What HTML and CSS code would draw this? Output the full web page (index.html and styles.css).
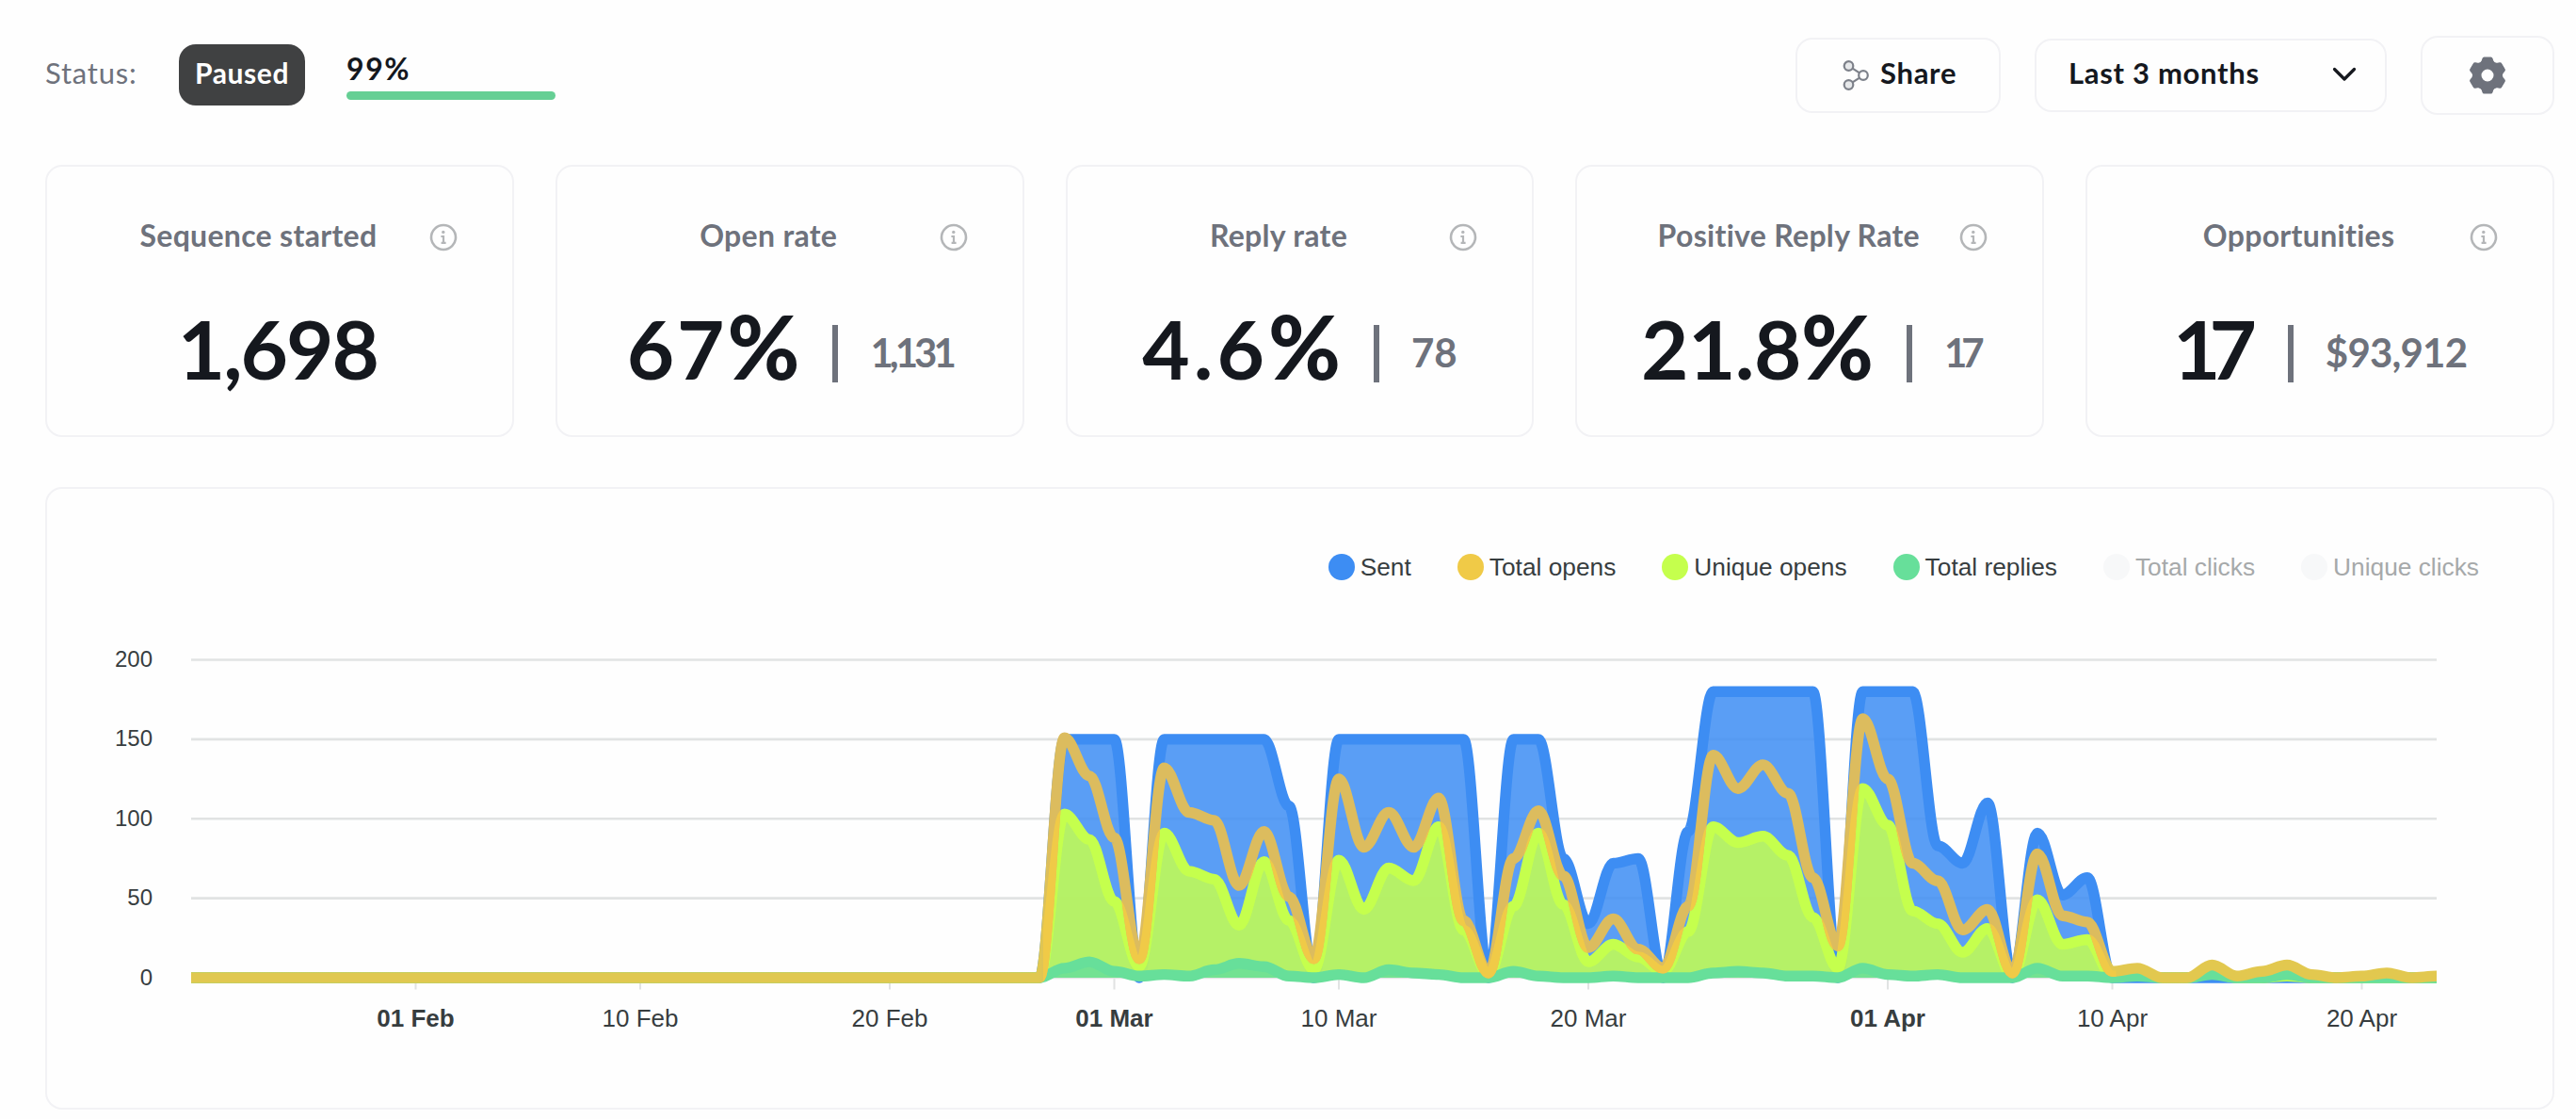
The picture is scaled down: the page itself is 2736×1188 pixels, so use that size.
FILE: index.html
```html
<!DOCTYPE html>
<html lang="en">
<head>
    <meta charset="UTF-8">
    <meta name="viewport" content="width=device-width, initial-scale=1.0">
    <title>Campaign Analytics</title>
    <link rel="stylesheet" href="styles.css">
</head>
<body>
    <svg class="sprite">
        <symbol id="icon-info" viewBox="0 0 30 30">
            <circle cx="15" cy="15" r="13" fill="none" stroke="currentColor" stroke-width="2.6"/>
            <circle cx="14.8" cy="9.4" r="1.7" fill="currentColor"/>
            <path d="M12.4 14h2.6v6.6M12.6 20.8h5" fill="none" stroke="currentColor" stroke-width="2.2"/>
        </symbol>
        <symbol id="gear-tooth" viewBox="-20 -20 40 40">
            <path d="M-3.6 -19.5H3.6Q5 -19.5 5.5 -18L6.3 -15.6Q7.2 -13.6 10 -12.4L6 -9H-6L-10 -12.4Q-7.2 -13.6 -6.3 -15.6L-5.5 -18Q-5 -19.5 -3.6 -19.5Z"/>
        </symbol>
    </svg>

    <div class="container">
        <div class="topbar">
            <span class="status-label">Status:</span>
            <span class="badge">Paused</span>
            <div class="progress">
                <span class="progress-value">99%</span>
                <div class="progress-bar"></div>
            </div>

            <div class="actions">
                <button class="btn btn-share">
                    <svg class="icon-share" viewBox="0 0 28 34" fill="#e6e8ea" stroke="currentColor" stroke-width="2.2">
                        <circle cx="6.5" cy="7" r="4.8"/>
                        <circle cx="22" cy="17" r="4.8" fill="none"/>
                        <circle cx="6.5" cy="27" r="4.8"/>
                        <path d="M10.6 9.6l7.4 4.8M10.6 24.4l7.4-4.8"/>
                    </svg>
                    <span>Share</span>
                </button>
                <button class="btn btn-range">
                    <span>Last 3 months</span>
                    <svg class="icon-chevron" viewBox="0 0 26 16" fill="none" stroke="currentColor" stroke-width="3.2" stroke-linecap="round" stroke-linejoin="round">
                        <path d="M2.5 2.5L13 13L23.5 2.5"/>
                    </svg>
                </button>
                <button class="btn btn-settings">
                    <svg class="icon-gear" viewBox="-20 -20 40 40" fill="currentColor">
                        <circle r="10.8" fill="none" stroke="currentColor" stroke-width="8.6"/>
                        <g id="teeth">
                            <use href="#gear-tooth" x="-20" y="-20" width="40" height="40"/>
                            <use href="#gear-tooth" x="-20" y="-20" width="40" height="40" transform="rotate(60)"/>
                            <use href="#gear-tooth" x="-20" y="-20" width="40" height="40" transform="rotate(120)"/>
                        </g>
                        <use href="#teeth" transform="rotate(180)"/>
                    </svg>
                </button>
            </div>
        </div>

        <div class="cards">
            <div class="card">
                <div class="card-header">
                    <h3>Sequence started</h3>
                    <svg class="icon-info"><use href="#icon-info"/></svg>
                </div>
                <div class="card-value sequence"><strong>1,698</strong></div>
            </div>
            <div class="card">
                <div class="card-header">
                    <h3>Open rate</h3>
                    <svg class="icon-info"><use href="#icon-info"/></svg>
                </div>
                <div class="card-value open-rate"><strong>67<b>%</b></strong><i class="divider"></i><span>1,131</span></div>
            </div>
            <div class="card">
                <div class="card-header">
                    <h3>Reply rate</h3>
                    <svg class="icon-info"><use href="#icon-info"/></svg>
                </div>
                <div class="card-value reply-rate"><strong>4.6<b>%</b></strong><i class="divider"></i><span>78</span></div>
            </div>
            <div class="card">
                <div class="card-header">
                    <h3>Positive Reply Rate</h3>
                    <svg class="icon-info"><use href="#icon-info"/></svg>
                </div>
                <div class="card-value positive"><strong>21.8<b>%</b></strong><i class="divider"></i><span>17</span></div>
            </div>
            <div class="card">
                <div class="card-header">
                    <h3>Opportunities</h3>
                    <svg class="icon-info"><use href="#icon-info"/></svg>
                </div>
                <div class="card-value opportunities"><strong>17</strong><i class="divider"></i><span>$93,912</span></div>
            </div>
        </div>

        <div class="chart-card">
            <div class="legend">
                <span class="legend-item"><i class="dot sent"></i>Sent</span>
                <span class="legend-item"><i class="dot opens"></i>Total opens</span>
                <span class="legend-item"><i class="dot unique"></i>Unique opens</span>
                <span class="legend-item"><i class="dot replies"></i>Total replies</span>
                <span class="legend-item off"><i class="dot"></i>Total clicks</span>
                <span class="legend-item off"><i class="dot"></i>Unique clicks</span>
            </div>
            <svg id="chart" class="chart" viewBox="0 0 2661 460"></svg>
        </div>
    </div>

    <script>
        // daily values, 23 Jan - 23 Apr; everything before 27 Feb is zero
        const START = 35;
        const DAYS = 91;
        const series = {
            sent: [150, 150, 150, 0, 150, 150, 150, 150, 150, 108, 0, 150, 150, 150, 150, 150, 150, 0,
                150, 150, 75, 34, 72, 75, 0, 92, 180, 180, 180, 180, 180, 0, 180, 180, 180, 83,
                72, 110, 0, 91, 52, 63],
            opens: [151, 127, 88, 12, 132, 104, 99, 58, 92, 51, 12, 125, 82, 104, 82, 113, 36, 3,
                75, 105, 64, 19, 37, 18, 6, 45, 140, 119, 134, 116, 63, 20, 163, 125, 72, 61,
                30, 43, 3, 78, 39, 35, 4, 6, 0, 0, 8, 1, 4, 8, 2, 0, 1, 3, 0, 1],
            unique: [103, 87, 48, 7, 91, 67, 62, 33, 73, 36, 5, 74, 43, 69, 61, 95, 30, 2,
                45, 91, 46, 10, 21, 13, 4, 29, 95, 85, 89, 77, 38, 6, 119, 96, 42, 34,
                16, 31, 1, 49, 21, 24, 1, 2, 0, 0, 3, 0, 0, 1],
            replies: [6, 10, 4, 1, 2, 1, 5, 9, 7, 1, 0, 2, 0, 5, 3, 2, 0, 0,
                4, 1, 0, 0, 1, 0, 0, 0, 3, 4, 3, 1, 1, 0, 6, 2, 1, 2,
                0, 0, 0, 6, 1, 1, 0, 1, 0, 0, 2, 0, 0, 2]
        };

        const left = 153, step = 26.5, zero = 378, unit = 1.6875;
        const right = left + step * (DAYS - 1);
        const px = i => left + step * i;
        const py = v => zero - v * unit;

        function linePath(values) {
            let d = `M${px(0)} ${py(0)}`;
            let prev = 0;
            for (let i = 1; i < DAYS; i++) {
                const v = values[i - START] || 0;
                const k = step * 0.35;
                d += `C${px(i - 1) + k} ${py(prev)} ${px(i) - k} ${py(v)} ${px(i)} ${py(v)}`;
                prev = v;
            }
            return d;
        }

        let svg = '';
        for (let v = 0; v <= 200; v += 50) {
            svg += `<line class="grid" x1="${left}" x2="${right}" y1="${py(v)}" y2="${py(v)}"/>`;
            svg += `<text class="y-label" x="112" y="${py(v) + 7.5}">${v}</text>`;
        }

        const ticks = [[9, '01 Feb'], [18, '10 Feb'], [28, '20 Feb'], [37, '01 Mar'], [46, '10 Mar'],
            [56, '20 Mar'], [68, '01 Apr'], [77, '10 Apr'], [87, '20 Apr']];
        for (const [i, label] of ticks) {
            svg += `<line class="tick" x1="${px(i)}" x2="${px(i)}" y1="${zero}" y2="${zero + 12.5}"/>`;
            svg += `<text class="x-label${label.startsWith('01') ? ' month' : ''}" x="${px(i)}" y="430">${label}</text>`;
        }

        const close = `L${right} ${zero}L${left} ${zero}Z`;
        const unique = linePath(series.unique);
        const opens = linePath(series.opens);

        svg += `<defs>
            <clipPath id="plot"><rect x="${left}" y="0" width="${right - left}" height="${zero + 6}"/></clipPath>
            <clipPath id="active"><rect x="${px(34) + 4}" y="0" width="${px(77) - px(34)}" height="${zero + 6}"/></clipPath>
            <mask id="overUnique" maskUnits="userSpaceOnUse" x="0" y="0" width="2661" height="460">
                <g clip-path="url(#active)"><path d="${unique + close}" fill="#fff"/>
                <path d="${unique}" fill="none" stroke="#fff" stroke-width="11.4"/></g>
            </mask>
            <linearGradient id="opensLine" gradientUnits="userSpaceOnUse" x1="${px(34)}" x2="${px(77)}" y1="0" y2="0">
                <stop offset="0" stop-color="#e0c850"/><stop offset="0.01" stop-color="#dcbc5e"/>
                <stop offset="0.99" stop-color="#dcbc5e"/><stop offset="1" stop-color="#e2c84f"/>
            </linearGradient>
        </defs><g clip-path="url(#plot)">`;
        for (const name of ['sent', 'unique', 'replies']) {
            const d = linePath(series[name]);
            svg += `<path class="area ${name}" d="${d + close}"/><path class="line ${name}" d="${d}"/>`;
        }
        svg += `<path class="line opens" d="${opens}"/>`;
        svg += `<path class="line opens-bright" d="${opens}" mask="url(#overUnique)"/></g>`;

        document.getElementById('chart').innerHTML = svg;
    </script>
</body>
</html>
```
FILE: styles.css
```css
* {
    box-sizing: border-box;
}

body {
    font-family: Lato, "Liberation Sans", sans-serif;
    margin: 0;
    padding: 0;
    background-color: #fefefe;
    color: #15181e;
}

.sprite {
    display: none;
}

.container {
    padding: 38px 23px 0 48px;
}

.topbar {
    display: flex;
    align-items: center;
    height: 84px;
}

.status-label {
    width: 142px;
    padding-bottom: 6px;
    font-size: 31px;
    letter-spacing: 0.8px;
    color: #6e727c;
}

.badge {
    width: 134px;
    height: 65px;
    line-height: 60px;
    margin-bottom: 2px;
    border-radius: 18px;
    background-color: #404142;
    color: white;
    font-size: 30px;
    font-weight: bold;
    letter-spacing: 0.6px;
    text-align: center;
}

.progress {
    width: 222px;
    margin-left: 44px;
}

.progress-value {
    display: block;
    font-size: 32px;
    font-weight: bold;
    letter-spacing: 1.6px;
    line-height: 38px;
}

.progress-bar {
    height: 9px;
    margin-top: 5px;
    border-radius: 5px;
    background-color: #65cf94;
}

.actions {
    display: flex;
    align-items: center;
    gap: 36px;
    margin-left: auto;
}

.btn {
    display: flex;
    align-items: center;
    border: 2px solid #f2f2f5;
    border-radius: 18px;
    background-color: #fefefe;
    color: #15181e;
    font-family: inherit;
    font-size: 31px;
    font-weight: bold;
    letter-spacing: 0.7px;
    padding: 0;
}

.btn span {
    padding-bottom: 6px;
}

.btn-share {
    width: 218px;
    height: 80px;
    padding-left: 48px;
    gap: 12px;
}

.btn-range {
    width: 374px;
    height: 78px;
    padding: 0 30px 0 34px;
    justify-content: space-between;
}

.btn-settings {
    width: 142px;
    height: 84px;
    justify-content: center;
}

.icon-share {
    width: 28px;
    height: 34px;
    color: #7d818a;
}

.icon-chevron {
    width: 26px;
    height: 16px;
    margin-bottom: 3px;
}

.icon-gear {
    width: 40px;
    height: 40px;
    color: #6e727c;
}

.cards {
    display: grid;
    grid-template-columns: repeat(5, 1fr);
    gap: 44px;
    margin-top: 53px;
}

.card {
    height: 289px;
    border: 2px solid #f2f2f5;
    border-radius: 18px;
    padding-top: 54px;
}

.card-header {
    display: flex;
    align-items: center;
    height: 42px;
    padding: 0 58px 0 43px;
}

.card-header h3 {
    flex: 1;
    margin: 0;
    padding-bottom: 5px;
    font-size: 32px;
    font-weight: bold;
    letter-spacing: 0.3px;
    color: #6e727c;
    text-align: center;
    white-space: nowrap;
}

.icon-info {
    width: 30px;
    height: 30px;
    color: #b4b6b8;
}

.card-value {
    display: flex;
    align-items: center;
    justify-content: center;
    height: 110px;
    margin-top: 47px;
}

.card-value strong {
    padding-bottom: 11px;
    font-size: 87px;
    line-height: 99px;
}

.card-value b {
    font-size: 93px;
    line-height: 0;
    letter-spacing: 0;
}

.card-value span {
    padding-bottom: 2px;
    font-size: 42px;
    font-weight: bold;
    color: #6e727c;
}

.divider {
    width: 6px;
    height: 61px;
    margin: 0 34px 0 35px;
    background-color: #6e727c;
}

.sequence strong { letter-spacing: -2px; margin-right: 4px; }
.open-rate strong { letter-spacing: 3px; }
.open-rate span { letter-spacing: -4px; }
.reply-rate strong { letter-spacing: 4px; }
.positive strong { letter-spacing: -0.5px; }
.positive span { letter-spacing: -6px; }
.opportunities strong { letter-spacing: -12px; margin-right: 10px; }
.opportunities span { letter-spacing: -0.8px; }

.chart-card {
    height: 661px;
    margin-top: 53px;
    border: 2px solid #f2f2f5;
    border-radius: 18px;
}

.legend {
    display: flex;
    justify-content: flex-end;
    gap: 49px;
    height: 28px;
    margin-top: 69px;
    padding-right: 78px;
    font-family: "Liberation Sans", sans-serif;
    font-size: 26.3px;
    line-height: 29px;
    color: #373d3f;
}

.legend-item {
    display: flex;
    align-items: center;
    gap: 6px;
}

.legend-item.off {
    color: #a6a9aa;
}

.dot {
    width: 28px;
    height: 28px;
    border-radius: 50%;
    background-color: #f7f8f9;
}

.dot.sent { background-color: #3d8df3; }
.dot.opens { background-color: #f0ca47; }
.dot.unique { background-color: #c5ff4d; }
.dot.replies { background-color: #67df9a; }

.chart {
    display: block;
    width: 2661px;
    height: 460px;
    margin-top: 44px;
}

.grid {
    stroke: #e1e3e3;
    stroke-width: 2.6;
}

.tick {
    stroke: #e1e3e3;
    stroke-width: 2;
}

.y-label, .x-label {
    font-family: "Liberation Sans", sans-serif;
    font-size: 24px;
    fill: #373d3f;
    text-anchor: end;
}

.x-label {
    font-size: 26px;
    text-anchor: middle;
}

.month {
    font-weight: bold;
}

.area {
    fill-opacity: 0.85;
}

.area.sent { fill: #3d8df3; }
.area.unique { fill: #c5ff4d; }
.area.replies { fill: #67df9a; }

.line {
    fill: none;
    stroke-width: 11.4;
}

.line.sent { stroke: #3d8df3; }
.line.unique { stroke: #c5ff4d; }
.line.replies { stroke: #67df9a; }
.line.opens { stroke: url(#opensLine); }
.line.opens-bright { stroke: #f0ca47; }
```
